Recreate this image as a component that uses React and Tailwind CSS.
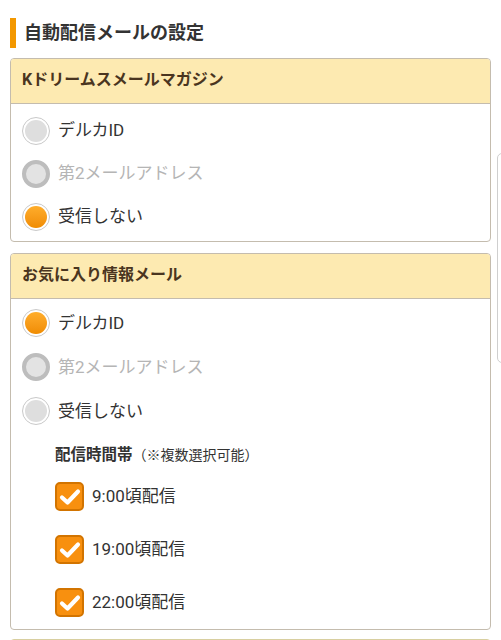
import React from "react";

const font = { fontFamily: 'Roboto, "Noto Sans CJK JP", "Noto Sans", sans-serif' };
const cjk = { fontFamily: '"Noto Sans CJK JP", "Noto Sans", sans-serif' };

function Radio({ state, label, h = "h-[43px]" }) {
  let circle;
  if (state === "checked") {
    circle = (
      <span className="flex h-[28px] w-[28px] items-center justify-center rounded-full border border-[#c9c9c9] bg-white">
        <span className="h-[22px] w-[22px] rounded-full bg-gradient-to-b from-[#ffad2a] to-[#f08c00]" />
      </span>
    );
  } else if (state === "disabled") {
    circle = (
      <span className="flex h-[28px] w-[28px] items-center justify-center rounded-full border-[4px] border-[#bdbdbd] bg-[#e3e3e3]" />
    );
  } else {
    circle = (
      <span className="flex h-[28px] w-[28px] items-center justify-center rounded-full border border-[#c9c9c9] bg-white">
        <span className="h-[22px] w-[22px] rounded-full bg-[#dedede]" />
      </span>
    );
  }
  return (
    <div className={`flex ${h} items-center pl-[11px]`}>
      {circle}
      <span
        className={`ml-[8px] text-[17px] leading-none ${
          state === "disabled" ? "text-[#b5b5b5]" : "text-[#333333]"
        }`}
      >
        {label}
      </span>
    </div>
  );
}

function Check({ label }) {
  return (
    <div className="flex h-[53px] items-center pl-[44px]">
      <span className="flex h-[29px] w-[29px] items-center justify-center rounded-[5px] border-2 border-[#d27400] bg-[#f8900f]">
        <svg width="22" height="18" viewBox="0 0 22 18">
          <path
            d="M3 9.5 L8.5 14.5 L19 3.5"
            fill="none"
            stroke="#ffffff"
            strokeWidth="4.2"
            strokeLinecap="round"
            strokeLinejoin="round"
          />
        </svg>
      </span>
      <span className="ml-[8px] text-[17px] leading-none text-[#333333]">{label}</span>
    </div>
  );
}

function Card({ title, children, className = "" }) {
  return (
    <div className={`overflow-hidden rounded-[4px] border border-[#c4bcae] bg-white ${className}`}>
      <div className="flex h-[45px] items-center border-b border-[#c4bcae] bg-[#fdeab1] pl-[11px] text-[16px] font-bold text-[#4a3520]">
        <span className="translate-y-[-1px]">{title}</span>
      </div>
      {children}
    </div>
  );
}

export default function App() {
  return (
    <div className="relative h-[640px] w-[501px] overflow-hidden bg-white" style={font}>
      <div className="flex items-center pt-[18px] pl-[10px]">
        <span className="h-[30px] w-[6px] bg-[#f39800]" />
        <span className="ml-[8px] text-[18px] font-bold leading-none text-[#333333]">
          自動配信メールの設定
        </span>
      </div>

      <div className="mx-[10px] mt-[10px] flex flex-col">
        <Card title="Kドリームスメールマガジン">
          <div className="pt-[5px] pb-[3px]">
            <Radio state="off" label="デルカID" />
            <Radio state="disabled" label="第2メールアドレス" />
            <Radio state="checked" label="受信しない" />
          </div>
        </Card>

        <Card title="お気に入り情報メール" className="mt-[11px]">
          <div className="pt-[2px]">
            <Radio state="checked" label="デルカID" h="h-[44px]" />
            <Radio state="disabled" label="第2メールアドレス" h="h-[44px]" />
            <Radio state="off" label="受信しない" h="h-[44px]" />
          </div>
          <div className="mt-[11px] flex h-[20px] items-center pl-[44px] text-[#333333]" style={cjk}>
            <span className="text-[15.5px] font-bold">配信時間帯</span>
            <span className="text-[14px]">（※複数選択可能）</span>
          </div>
          <div className="pt-[6px]">
            <Check label="9:00頃配信" />
            <Check label="19:00頃配信" />
            <Check label="22:00頃配信" />
          </div>
        </Card>

        <div className="mt-[9px] h-[20px] rounded-t-[4px] border border-[#d8cfa0] bg-[#fdeab1]" />
      </div>

      <div className="absolute right-[-6px] top-[153px] h-[210px] w-[10px] rounded-[5px] border border-[#cfcfcf] bg-white" />
    </div>
  );
}
